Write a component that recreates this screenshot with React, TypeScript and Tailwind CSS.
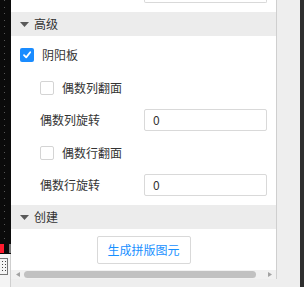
import React from "react";

const font = { fontFamily: '"Noto Sans CJK SC", "Microsoft YaHei", sans-serif' };

function Caret() {
  return (
    <svg width="9" height="5" viewBox="0 0 9 5" className="shrink-0">
      <path d="M0 0 L9 0 L4.5 5 Z" fill="#595959" />
    </svg>
  );
}

function Header({ title }: { title: string }) {
  return (
    <div className="h-[24px] bg-[#ececec] flex items-center pl-[9px] gap-[5px] shrink-0">
      <Caret />
      <span className="text-[12px] leading-none text-[#333]">{title}</span>
    </div>
  );
}

function Box({ checked }: { checked?: boolean }) {
  if (checked) {
    return (
      <div className="w-[14px] h-[14px] rounded-[2px] bg-[#1a8cff] flex items-center justify-center shrink-0">
        <svg width="10" height="10" viewBox="0 0 10 10">
          <path d="M2 5.2 L4.2 7.4 L8.2 2.2" stroke="#fff" strokeWidth="1.8" fill="none" strokeLinecap="round" strokeLinejoin="round" />
        </svg>
      </div>
    );
  }
  return <div className="w-[14px] h-[14px] rounded-[2px] border border-[#d4d4d4] bg-white shrink-0" />;
}

function Input() {
  return (
    <div className="w-[123px] h-[22px] border border-[#d9d9d9] rounded-[2px] bg-white flex items-center pl-[8px] text-[12px] text-[#333]">
      0
    </div>
  );
}

export default function App() {
  return (
    <div className="w-[304px] h-[287px] flex bg-[#eeeeee] overflow-hidden" style={font}>
      {/* left strip */}
      <div className="w-[11px] h-full flex flex-col shrink-0">
        <div className="h-[243px] bg-[#0b0b0b] relative">
          <div className="absolute left-[4px] top-0 bottom-0 w-[1px] bg-[repeating-linear-gradient(to_bottom,#555_0px,#555_1px,transparent_1px,transparent_6.6px)]" />
        </div>
        <div className="h-[11px] bg-[#0b0b0b] flex items-center">
          <div className="w-[4px] h-[9px] bg-[#ff1a2e]" />
          <div className="ml-[5px] w-[2px] h-[9px] bg-[#777]" />
        </div>
        <div className="flex-1 bg-[#f4f4f4] border-r border-[#cfcfcf] pt-[4px]">
          <div className="w-[8px] h-[17px] border border-l-0 border-[#777] grid grid-cols-2 gap-[2px] p-[2px] content-start">
            {Array.from({ length: 8 }).map((_, i) => (
              <div key={i} className="w-[1px] h-[1px] bg-[#444]" />
            ))}
          </div>
        </div>
      </div>

      {/* panel */}
      <div className="w-[266px] h-[279px] bg-white border-r border-[#cfcfcf] flex flex-col shrink-0">
        <div className="h-[12px] pl-[133px] shrink-0">
          <div className="w-[123px] h-[3px] border border-t-0 border-[#d9d9d9] rounded-b-[2px]" />
        </div>
        <Header title="高级" />
        <div className="flex flex-col pt-[3px] pb-[3.5px] text-[12px] text-[#333]">
          <div className="h-[32.5px] flex items-center pl-[9px] gap-[8px]">
            <Box checked />
            <span>阴阳板</span>
          </div>
          <div className="h-[32.5px] flex items-center pl-[29px] gap-[8px]">
            <Box />
            <span>偶数列翻面</span>
          </div>
          <div className="h-[32.5px] flex items-center pl-[29px]">
            <span className="w-[104px]">偶数列旋转</span>
            <Input />
          </div>
          <div className="h-[32.5px] flex items-center pl-[29px] gap-[8px]">
            <Box />
            <span>偶数行翻面</span>
          </div>
          <div className="h-[32.5px] flex items-center pl-[29px]">
            <span className="w-[104px]">偶数行旋转</span>
            <Input />
          </div>
        </div>
        <Header title="创建" />
        <div className="flex-1 flex justify-center pt-[7px]">
          <button className="w-[94px] h-[28px] border border-[#d9d9d9] rounded-[2px] bg-white text-[12px] text-[#1890ff]">
            生成拼版图元
          </button>
        </div>
        {/* horizontal scrollbar */}
        <div className="h-[9px] bg-[#f1f1f1] flex items-center shrink-0">
          <svg width="4" height="5" viewBox="0 0 4 5" className="ml-[5px]">
            <path d="M4 0 L4 5 L0 2.5 Z" fill="#a3a3a3" />
          </svg>
          <div className="ml-[4px] w-[232px] h-[7px] rounded-full bg-[#c1c1c1]" />
          <svg width="4" height="5" viewBox="0 0 4 5" className="ml-[12px]">
            <path d="M0 0 L0 5 L4 2.5 Z" fill="#a3a3a3" />
          </svg>
        </div>
      </div>

      <div className="w-[23px] h-full bg-[#eeeeee] shrink-0" />
      <div className="flex-1 h-full bg-[#2e2e2e]" />
    </div>
  );
}
